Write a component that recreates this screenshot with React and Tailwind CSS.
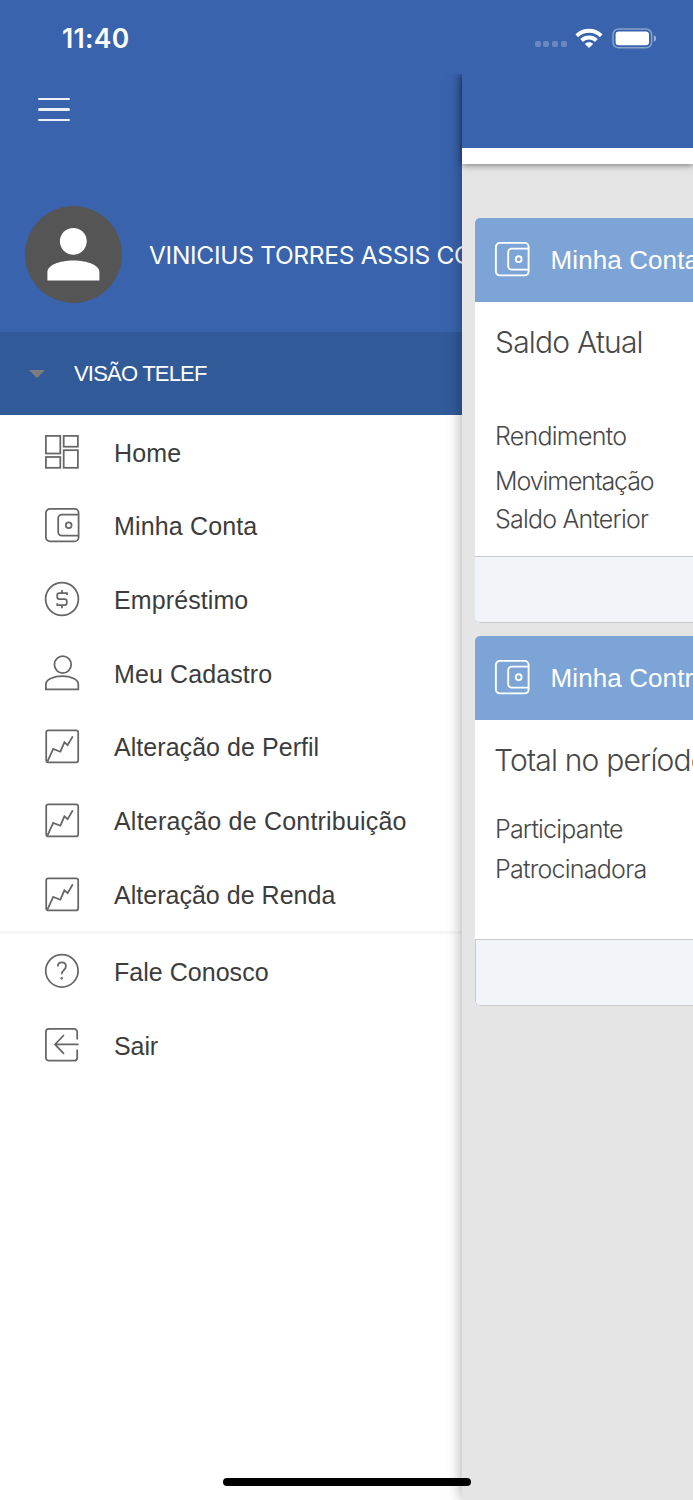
const HomeIcon = () => (
  <>
    <rect x="1.9" y="1.9" width="14.4" height="17.6" />
    <rect x="19.7" y="1.9" width="14.2" height="10.8" />
    <rect x="1.9" y="23" width="14.4" height="10.8" />
    <rect x="19.7" y="16.2" width="14.2" height="17.6" />
  </>
);

const WalletIcon = () => (
  <>
    <path d="M34.6 7.6H17.8a3.6 3.6 0 0 0-3.6 3.6v13.800a3.600 3.600 0 0 0 3.600 3.600H34.6" />
    <path d="M34.600 7.600V30.400M34.600 8.500V5.900a4 4 0 0 0-4-4H5.900a4 4 0 0 0-4 4v24.500a4 4 0 0 0 4 4h24.700a4 4 0 0 0 4-4" />
    <circle cx="24.700" cy="18.200" r="2.900" />
  </>
);

const LoanIcon = () => (
  <>
    <circle cx="18" cy="18" r="16.4" />
    <path d="M23 14v-1.800H15.200a2 2 0 0 0-2 2v1.8a2 2 0 0 0 2 2h5.600a2 2 0 0 1 2 2v2a2 2 0 0 1-2 2h-7.600v-1.800M18 9v3.200M18 24v3.200" />
  </>
);

const PersonIcon = () => (
  <>
    <circle cx="18.8" cy="9.6" r="8.4" />
    <path d="M1.9 34.4v-5.200c0-4.400 7.400-8 16.400-8s16 3.600 16 8v5.200z" />
  </>
);

const ChartIcon = () => (
  <>
    <rect x="2.2" y="2.4" width="32" height="32" rx="2.2" />
    <path d="M3.400 33.700l5.800-12.800 7.200 2.800 4-9.400 3.200 2.800 5.200-8.800" />
  </>
);

const HelpIcon = () => (
  <>
    <circle cx="17.9" cy="17.8" r="16.2" />
    <path d="M13.800 13.600c0-2.600 1.700-4.200 4-4.200 2.400 0 4.100 1.600 4.100 3.900 0 3.900-4.200 4-4.200 8" />
    <circle cx="17.700" cy="25.300" r="0.500" />
  </>
);

const ExitIcon = () => (
  <>
    <path d="M33.2 12.400V4.900a3 3 0 0 0-3-3H4.900a3 3 0 0 0-3 3v25.800a3 3 0 0 0 3 3h25.300a3 3 0 0 0 3-3v-8.300" />
    <path d="M34.600 17.400H11.400M20 8l-9 9.400 9 9.400" />
  </>
);

const Icon = ({ icon: Shape, className }) => (
  <svg viewBox="0 0 36 36" fill="none" stroke="currentColor" className={`w-9 h-9 shrink-0 ${className}`}>
    <Shape />
  </svg>
);

const mainItems = [
  { label: 'Home', icon: HomeIcon, tracking: 'tracking-[0.15px]' },
  { label: 'Minha Conta', icon: WalletIcon, tracking: 'tracking-[0.15px]' },
  { label: 'Empréstimo', icon: LoanIcon, tracking: 'tracking-[0.1px]' },
  { label: 'Meu Cadastro', icon: PersonIcon, tracking: 'tracking-[0.1px]' },
  { label: 'Alteração de Perfil', icon: ChartIcon, tracking: 'tracking-[0.05px]' },
  { label: 'Alteração de Contribuição', icon: ChartIcon, tracking: 'tracking-[0.2px]' },
  { label: 'Alteração de Renda', icon: ChartIcon, tracking: 'tracking-[0.02px]' },
];

const footerItems = [
  { label: 'Fale Conosco', icon: HelpIcon, tracking: 'tracking-[0.03px]' },
  { label: 'Sair', icon: ExitIcon, tracking: 'tracking-[-0.1px]' },
];

function MenuItem({ label, icon, tracking }) {
  return (
    <li className="flex items-center h-[73.65px] pl-11">
      <Icon icon={icon} className="-mt-0.5 stroke-[1.75] text-[#666666]" />
      <span className={`ml-[34px] mt-px text-[25px] leading-none text-[#3c3c3c] ${tracking}`}>{label}</span>
    </li>
  );
}

function StatusBar() {
  return (
    <div className="relative z-20 flex items-center justify-between h-[74px] pl-[62px] pr-[36px] pt-0.5 bg-[#3963ac] text-white">
      <span className="mt-px font-['Inter',sans-serif] text-[26.5px] font-semibold leading-none tracking-[0.3px]">11:40</span>
      <div className="flex items-center">
        <div className="flex gap-[2.6px] mt-3 mr-[8.5px]">
          {[0, 1, 2, 3].map((dot) => (
            <span key={dot} className="w-1.5 h-1.5 rounded-[2px] bg-white/25" />
          ))}
        </div>
        <svg viewBox="0 0 28 21" className="w-7 h-[21px] mr-[9px]" fill="currentColor">
          <path d="M14 .8C8.900 .8 4.300 2.700 .8 5.900c-.3.3-.3.6 0 .9l1.900 1.900c.3.3.6.3.9 0C6.400 6.200 10 4.700 14 4.700s7.600 1.500 10.400 4c.3.3.6.3.9 0l1.900-1.900c.3-.3.3-.6 0-.9C23.700 2.700 19.100.8 14 .8z" />
          <path d="M14 7.500c-3.200 0-6.100 1.200-8.400 3.200-.3.3-.3.6 0 .9l2 1.900c.3.3.6.3.9 0 1.500-1.300 3.400-2.100 5.500-2.100s4 .8 5.500 2.100c.3.3.6.3.9 0l2-1.900c.3-.3.3-.6 0-.9-2.300-2-5.200-3.200-8.400-3.200z" />
          <path d="M14 14.200c-1.400 0-2.700.5-3.700 1.300-.3.300-.3.600 0 .9l3.200 3.200c.3.300.7.300 1 0l3.200-3.200c.3-.3.3-.6 0-.9-1-.8-2.300-1.300-3.700-1.300z" />
        </svg>
        <svg viewBox="0 0 45 21" className="w-[45px] h-[21px]" fill="none">
          <rect x="1" y="1" width="38.6" height="18.8" rx="5.5" stroke="#fff" strokeOpacity=".4" strokeWidth="1.5" />
          <rect x="3.6" y="3.5" width="33.4" height="13.8" rx="3.2" fill="#fff" />
          <path d="M41.800 7.200c1.500.5 2.300 1.700 2.300 3.200s-.8 2.700-2.300 3.200z" fill="#fff" fillOpacity=".5" />
        </svg>
      </div>
    </div>
  );
}

function Drawer() {
  return (
    <aside className="w-[462px] shrink-0 overflow-hidden bg-white">
      <div className="h-[257.5px] bg-[#3963ac] text-white">
        <button className="flex flex-col gap-[8.4px] pt-[23.5px] pl-[38px]">
          <span className="w-8 h-[2.4px] rounded-full bg-[#edf1f8]" />
          <span className="w-8 h-[2.4px] rounded-full bg-[#edf1f8]" />
          <span className="w-8 h-[2.4px] rounded-full bg-[#edf1f8]" />
        </button>
        <div className="flex items-center mt-[84.5px] pl-[25px]">
          <div className="w-[97px] h-[97px] shrink-0 rounded-full bg-[#555555]">
            <svg viewBox="0 0 97 97" fill="#fff" className="w-full h-full">
              <circle cx="48.3" cy="35.3" r="13.4" />
              <path d="M22.400 74.400V66c0-6.500 11.600-11.500 26-11.500s26 5 26 11.500v8.400z" />
            </svg>
          </div>
          <span className="ml-[27px] mt-0.5 whitespace-nowrap font-['Inter',sans-serif] text-[24.5px] font-normal leading-none tracking-[-0.3px]">
            VINICIUS TORRES ASSIS CO
          </span>
        </div>
      </div>

      <div className="flex items-center h-[83.5px] pl-[29px] bg-[#315a99] text-white">
        <svg viewBox="0 0 16 8" className="w-4 h-2 mt-px fill-[#7d7d7d]">
          <path d="M0 0h16L8 8z" />
        </svg>
        <span className="ml-[29px] mt-0.5 text-[22px] leading-none tracking-[-0.8px]">VISÃO TELEF</span>
      </div>

      <ul className="pt-[1px]">
        {mainItems.map((item) => (
          <MenuItem key={item.label} {...item} />
        ))}
      </ul>
      <hr className="h-[3px] border-0 bg-[#f6f6f6]" />
      <ul className="pt-[0.7px]">
        {footerItems.map((item) => (
          <MenuItem key={item.label} {...item} />
        ))}
      </ul>
    </aside>
  );
}

function CardHeader({ title }) {
  return (
    <div className="flex items-center h-[83.5px] pl-[19px] bg-[#7da4d6] text-white">
      <Icon icon={WalletIcon} className="-mt-px stroke-[1.9]" />
      <h2 className="ml-[20.5px] mt-px whitespace-nowrap font-['Liberation_Sans',Arial,sans-serif] text-[26px] font-normal leading-none tracking-[0.1px]">
        {title}
      </h2>
    </div>
  );
}

function Content() {
  return (
    <main className="relative w-[231px] shrink-0 bg-[#e5e5e5] shadow-[0_0_14px_rgba(0,0,0,0.36)]">
      <header className="h-[90px] pt-[74px] bg-[#3963ac] shadow-[0_1px_7px_rgba(0,0,0,0.5)]">
        <div className="h-4 bg-white" />
      </header>

      <div className="pt-[54px] pl-[13px] font-['Inter',sans-serif] font-light text-[#484848]">
        <section className="overflow-hidden rounded-l-[5px] bg-white">
          <CardHeader title="Minha Conta" />
          <div className="h-[254.5px] pt-[23px] pl-5 whitespace-nowrap">
            <p className="text-[30px] leading-[34px] tracking-[-0.8px]">Saldo Atual</p>
            <p className="mt-[62px] text-[25px] leading-[30px] tracking-[-0.75px]">Rendimento</p>
            <p className="mt-[15.5px] text-[25px] leading-[30px] tracking-[-1.1px]">Movimentação</p>
            <p className="mt-2 text-[25px] leading-[30px] tracking-[-0.8px]">Saldo Anterior</p>
          </div>
          <div className="h-[66.5px] rounded-bl-[5px] border-y border-[#c8cbce] bg-[#f1f5fa]" />
        </section>

        <section className="mt-[13.5px] overflow-hidden rounded-l-[5px] bg-white">
          <CardHeader title="Minha Contribuição" />
          <div className="h-[219px] pt-[23px] pl-5 whitespace-nowrap">
            <p className="-ml-px text-[30px] leading-[34px] tracking-[-0.8px]">Total no período</p>
            <p className="mt-[37px] text-[25px] leading-[30px] tracking-[-0.8px]">Participante</p>
            <p className="mt-2.5 text-[25px] leading-[30px] tracking-[-0.75px]">Patrocinadora</p>
          </div>
          <div className="h-[67px] rounded-bl-[5px] border border-r-0 border-[#c8cbce] bg-[#f1f5fa]" />
        </section>
      </div>
    </main>
  );
}

export default function App() {
  return (
    <div className="relative flex flex-col w-[693px] h-[1500px] overflow-hidden bg-white font-['Liberation_Sans',Arial,sans-serif]">
      <StatusBar />
      <div className="flex grow">
        <Drawer />
        <Content />
      </div>
      {/* home indicator */}
      <div className="absolute z-30 left-[222.5px] bottom-3.5 w-[248px] h-2 rounded-full bg-black" />
    </div>
  );
}
